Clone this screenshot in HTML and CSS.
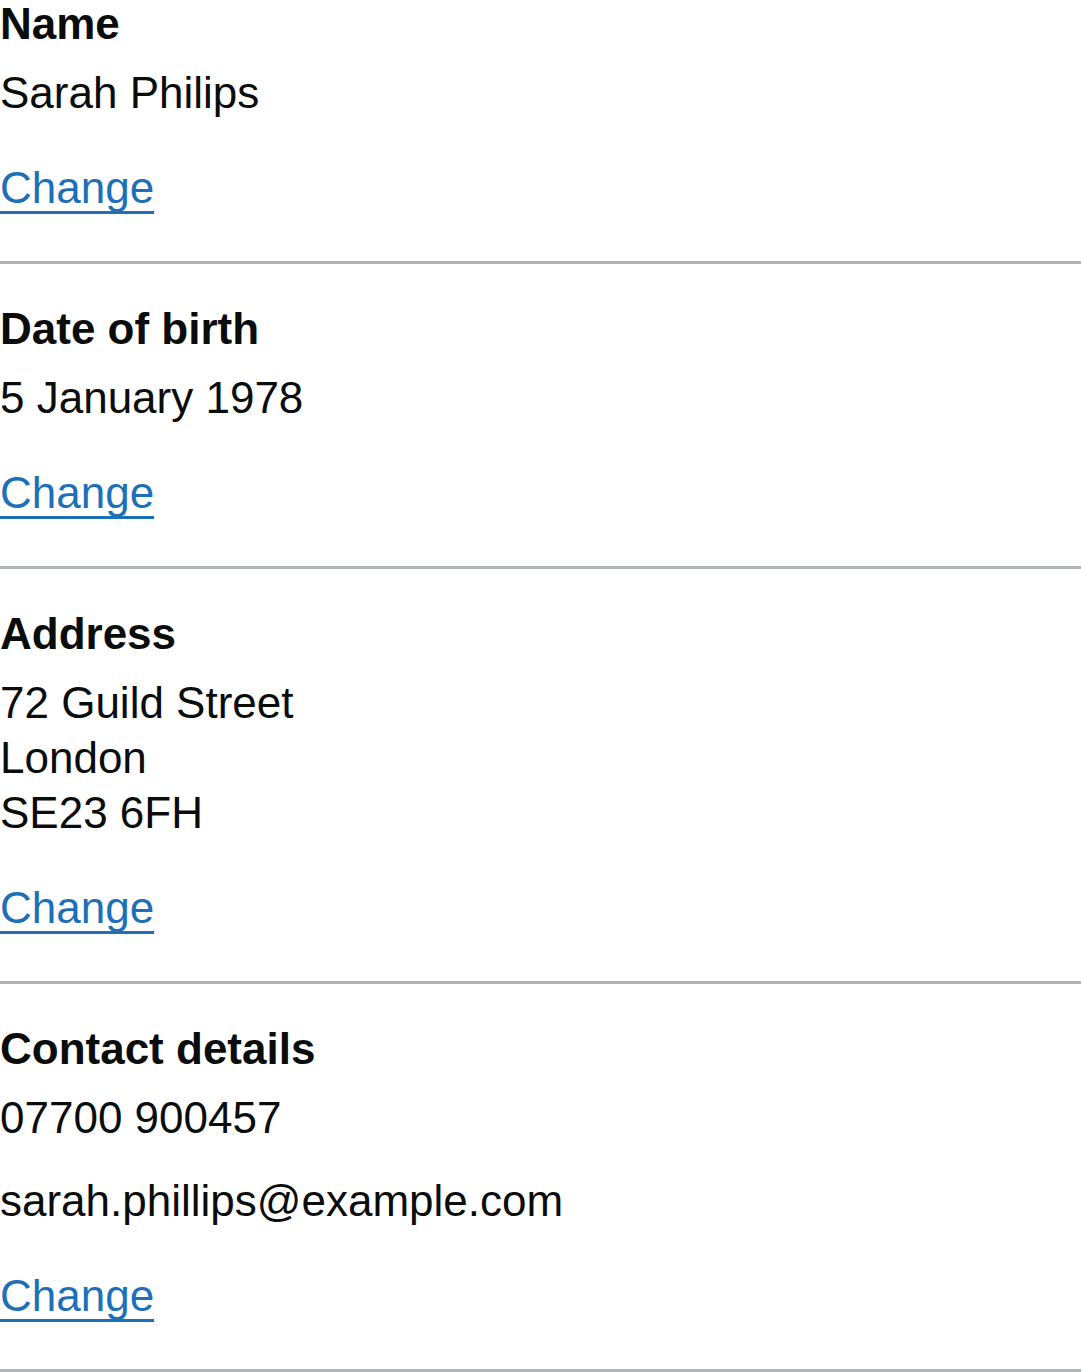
FILE: index.html
```html
<!DOCTYPE html>
<html lang="en">
<head>
<meta charset="utf-8">
<title>Summary list</title>
<link rel="stylesheet" href="styles.css">
</head>
<body>
<dl class="summary-list">
  <div class="summary-row">
    <dt class="summary-key">Name</dt>
    <dd class="summary-value">Sarah Philips</dd>
    <dd class="summary-actions"><a class="link" href="#">Change</a></dd>
  </div>
  <div class="summary-row">
    <dt class="summary-key">Date of birth</dt>
    <dd class="summary-value">5 January 1978</dd>
    <dd class="summary-actions"><a class="link" href="#">Change</a></dd>
  </div>
  <div class="summary-row">
    <dt class="summary-key">Address</dt>
    <dd class="summary-value">72 Guild Street<br>London<br>SE23 6FH</dd>
    <dd class="summary-actions"><a class="link" href="#">Change</a></dd>
  </div>
  <div class="summary-row">
    <dt class="summary-key">Contact details</dt>
    <dd class="summary-value">
      <p class="value-para">07700 900457</p>
      <p class="value-para">sarah.phillips@example.com</p>
    </dd>
    <dd class="summary-actions"><a class="link" href="#">Change</a></dd>
  </div>
</dl>
</body>
</html>
```
FILE: styles.css
```css
html, body {
  margin: 0;
  padding: 0;
  background: #ffffff;
}

body {
  font-family: "Liberation Sans", Arial, sans-serif;
  font-size: 44px;
  line-height: 55px;
  color: #0b0c0c;
}

.summary-list {
  margin: -4px 0 0 0;
  padding: 0;
}

.summary-row {
  display: block;
  border-bottom: 3px solid #b1b4b6;
  margin-bottom: 37px;
}

.summary-key {
  margin: 0 0 14px 0;
  font-weight: 700;
}

.summary-value {
  margin: 0 0 40px 0;
}

.value-para {
  margin: 0 0 28px 0;
}

.value-para:last-child {
  margin-bottom: 0;
}

.summary-actions {
  margin: 0 0 46px 0;
}

.link {
  color: #1d70b8;
  text-decoration: underline;
  text-decoration-thickness: 3px;
  text-underline-offset: 8px;
  text-decoration-skip-ink: none;
}
```
